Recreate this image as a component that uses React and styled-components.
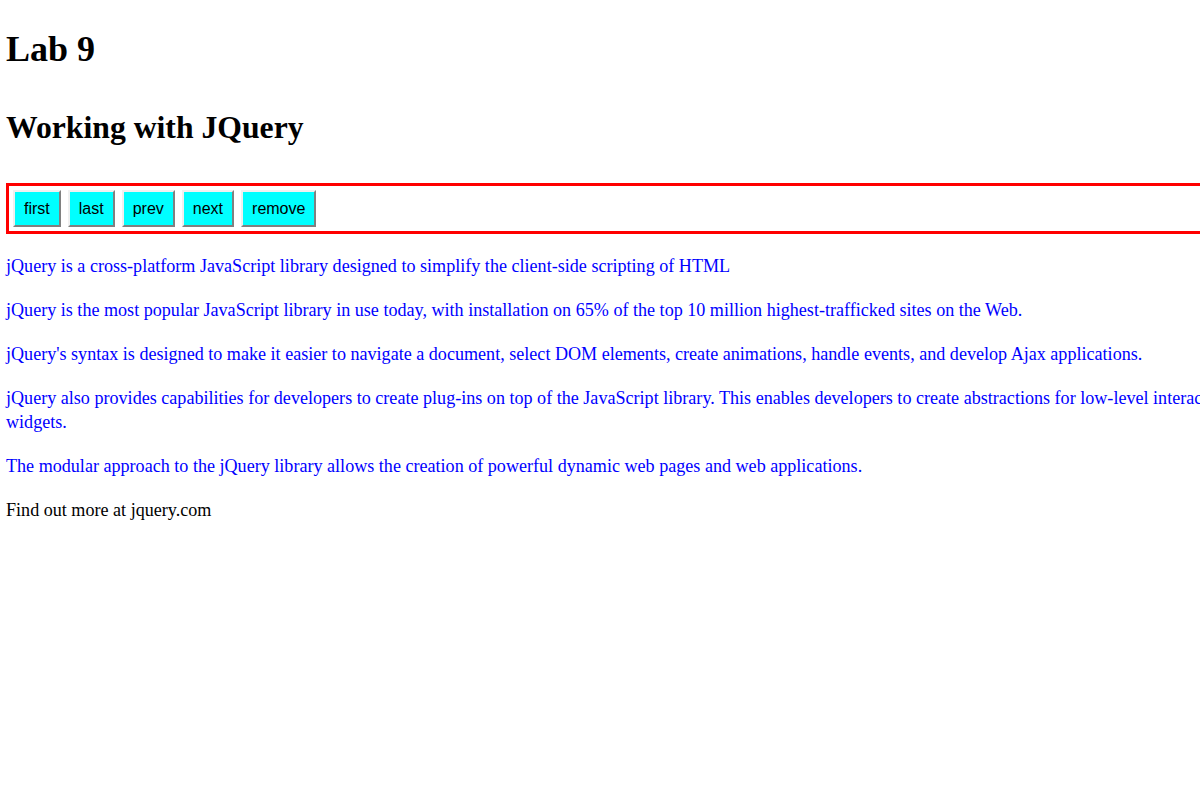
import styled, { createGlobalStyle } from "styled-components";

const GlobalStyle = createGlobalStyle`
  html, body {
    overflow: hidden;
  }
  body {
    margin: 0;
    background: #ffffff;
    font-family: "Liberation Serif", "Times New Roman", serif;
  }
`;

const Page = styled.div`
  width: 1690px;
  padding: 8px 6px;
`;

const Title = styled.h1`
  font-size: 36px;
  font-weight: bold;
  margin: 20px 0 40px;
  color: #000000;
`;

const Subtitle = styled.h2`
  font-size: 31.7px;
  font-weight: bold;
  margin: 0 0 37px;
  color: #000000;
`;

const Toolbar = styled.div`
  display: flex;
  gap: 7px;
  padding: 4px;
  border: 3px solid #ff0000;
`;

const Button = styled.button`
  height: 37px;
  padding: 0 9px;
  background: #00ffff;
  border-style: solid;
  border-width: 2px;
  border-color: #f0f0f0 #808080 #808080 #f0f0f0;
  font-family: "Liberation Sans", Arial, sans-serif;
  font-size: 16px;
  color: #000000;
`;

const Para = styled.p`
  font-size: 18.1px;
  line-height: 24px;
  margin: 20px 0;
  color: ${(p) => (p.plain ? "#000000" : "#0000ff")};
`;

const buttons = ["first", "last", "prev", "next", "remove"];

const paragraphs = [
  "jQuery is a cross-platform JavaScript library designed to simplify the client-side scripting of HTML",
  "jQuery is the most popular JavaScript library in use today, with installation on 65% of the top 10 million highest-trafficked sites on the Web.",
  "jQuery's syntax is designed to make it easier to navigate a document, select DOM elements, create animations, handle events, and develop Ajax applications.",
  "jQuery also provides capabilities for developers to create plug-ins on top of the JavaScript library. This enables developers to create abstractions for low-level interaction and animation, advanced effects and high-level, theme-able widgets.",
  "The modular approach to the jQuery library allows the creation of powerful dynamic web pages and web applications.",
];

export default function App() {
  return (
    <Page>
      <GlobalStyle />
      <Title>Lab 9</Title>
      <Subtitle>Working with JQuery</Subtitle>
      <Toolbar>
        {buttons.map((b) => (
          <Button key={b}>{b}</Button>
        ))}
      </Toolbar>
      {paragraphs.map((t, i) => (
        <Para key={i}>{t}</Para>
      ))}
      <Para plain>Find out more at jquery.com</Para>
    </Page>
  );
}
